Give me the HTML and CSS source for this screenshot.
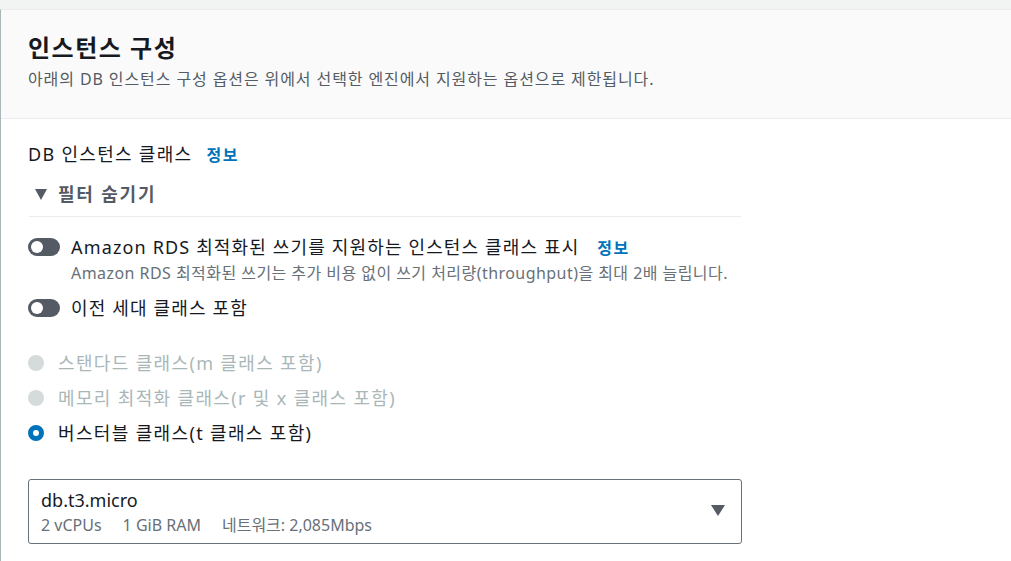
FILE: index.html
```html
<!DOCTYPE html>
<html lang="ko">
<head>
<meta charset="utf-8">
<link rel="stylesheet" href="styles.css">
</head>
<body>
<div class="top-strip"></div>
<section class="card">
  <header class="card-header">
    <h2 class="title">인스턴스 구성</h2>
    <p class="subtitle">아래의 DB 인스턴스 구성 옵션은 위에서 선택한 엔진에서 지원하는 옵션으로 제한됩니다.</p>
  </header>
  <div class="card-body">
    <div class="field-label">DB 인스턴스 클래스 <a class="info">정보</a></div>
    <div class="filter">
      <div class="filter-head"><span class="caret"></span>필터 숨기기</div>
    </div>
    <div class="toggle-row first">
      <span class="toggle"><span class="knob"></span></span>
      <div class="toggle-text">
        <div class="toggle-label">Amazon RDS 최적화된 쓰기를 지원하는 인스턴스 클래스 표시 <a class="info">정보</a></div>
        <div class="toggle-desc">Amazon RDS 최적화된 쓰기는 추가 비용 없이 쓰기 처리량(throughput)을 최대 2배 늘립니다.</div>
      </div>
    </div>
    <div class="toggle-row second">
      <span class="toggle"><span class="knob"></span></span>
      <div class="toggle-text">
        <div class="toggle-label">이전 세대 클래스 포함</div>
      </div>
    </div>
    <div class="radios">
      <div class="radio-row disabled"><span class="radio"></span>스탠다드 클래스(m 클래스 포함)</div>
      <div class="radio-row disabled"><span class="radio"></span>메모리 최적화 클래스(r 및 x 클래스 포함)</div>
      <div class="radio-row"><span class="radio checked"></span>버스터블 클래스(t 클래스 포함)</div>
    </div>
    <div class="select">
      <div class="select-text">
        <div class="select-value">db.t3.micro</div>
        <div class="select-meta"><span>2 vCPUs</span><span>1 GiB RAM</span><span>네트워크: 2,085Mbps</span></div>
      </div>
      <span class="select-caret"></span>
    </div>
  </div>
</section>
</body>
</html>
```
FILE: styles.css
```css
html, body {
  margin: 0;
  padding: 0;
}
body {
  background: #f2f3f3;
  font-family: "Noto Sans", "Noto Sans CJK KR", sans-serif;
  color: #16191f;
  width: 1011px;
  height: 561px;
  overflow: hidden;
}
.top-strip {
  height: 9px;
}
.card {
  background: #ffffff;
  border-top: 1px solid #eaeded;
  border-left: 1px solid #aab7b8;
  height: 560px;
}
.card-header {
  background: #fafafa;
  border-bottom: 1px solid #eaeded;
  padding: 22px 27px 29px;
}
.title {
  margin: 0;
  font-size: 24px;
  line-height: 32px;
  font-weight: 700;
  color: #16191f;
  letter-spacing: 1.5px;
}
.subtitle {
  margin: 5px 0 0;
  font-size: 16px;
  line-height: 20px;
  color: #545b64;
  letter-spacing: 0.9px;
}
.card-body {
  padding: 24px 27px 0;
  width: 714px;
}
.field-label {
  font-size: 18px;
  line-height: 22px;
  letter-spacing: 1.3px;
}
.info {
  color: #0073bb;
  font-weight: 700;
  font-size: 16px;
  margin-left: 8px;
  letter-spacing: 1.5px;
}
.filter {
  margin-top: 17px;
  padding-bottom: 11px;
  border-bottom: 1px solid #eaeded;
  margin-left: 1px;
  width: 712px;
}
.filter-head {
  display: flex;
  align-items: center;
  font-size: 18px;
  line-height: 22px;
  font-weight: 700;
  color: #545b64;
  letter-spacing: 1.8px;
}
.caret {
  width: 0;
  height: 0;
  border-left: 6px solid transparent;
  border-right: 6px solid transparent;
  border-top: 11px solid #545b64;
  margin: 0 11px 0 6px;
}
.toggle-row {
  display: flex;
  align-items: flex-start;
  gap: 11px;
}
.toggle-row.first {
  margin-top: 19px;
}
.toggle-row.second {
  margin-top: 14px;
}
.toggle {
  flex: none;
  width: 32px;
  height: 18px;
  border-radius: 9px;
  background: #545b64;
  margin-top: 2px;
  display: flex;
  align-items: center;
  padding-left: 3px;
  box-sizing: border-box;
}
.knob {
  width: 12px;
  height: 12px;
  border-radius: 50%;
  background: #ffffff;
}
.toggle-label {
  font-size: 18px;
  line-height: 22px;
  letter-spacing: 1.15px;
}
.toggle-label .info {
  margin-left: 12px;
}
.toggle-desc {
  margin-top: 4px;
  font-size: 16px;
  line-height: 20px;
  color: #687078;
  letter-spacing: 0.45px;
}
.radios {
  margin-top: 33px;
  display: flex;
  flex-direction: column;
  gap: 13px;
}
.radio-row {
  display: flex;
  align-items: center;
  gap: 14px;
  font-size: 18px;
  line-height: 22px;
  letter-spacing: 1.35px;
}
.radio-row.disabled {
  color: #aab7b8;
}
.radio {
  flex: none;
  width: 16px;
  height: 16px;
  border-radius: 50%;
  background: #d5dbdb;
  box-sizing: border-box;
}
.radio.checked {
  background: #ffffff;
  border: 5px solid #0073bb;
}
.select {
  margin-top: 35px;
  border: 1px solid #687078;
  border-radius: 3px;
  display: flex;
  align-items: center;
  justify-content: space-between;
  padding: 9px 16px 8px 12px;
  width: 714px;
  box-sizing: border-box;
}
.select-value {
  font-size: 18px;
  line-height: 22px;
}
.select-meta {
  margin-top: 4px;
  font-size: 16px;
  line-height: 20px;
  color: #687078;
  display: flex;
  gap: 21px;
}
.select-caret {
  width: 0;
  height: 0;
  border-left: 7px solid transparent;
  border-right: 7px solid transparent;
  border-top: 11px solid #545b64;
  margin-top: -4px;
}
```
